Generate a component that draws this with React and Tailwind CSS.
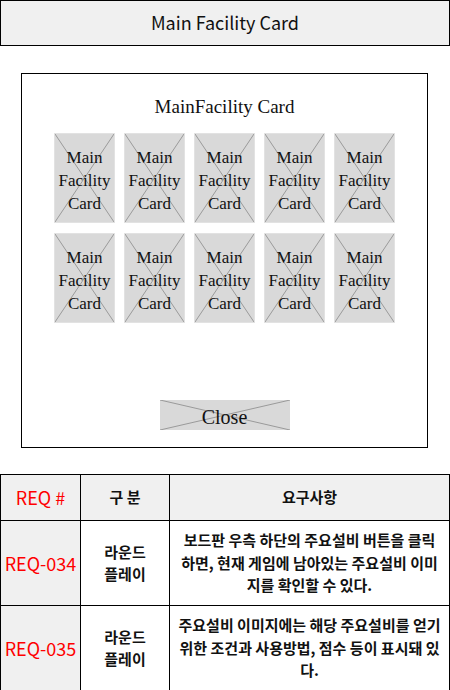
import React from "react";

const sans = "font-['Noto_Sans_CJK_KR','Noto_Sans',sans-serif]";
const serif = "font-['Liberation_Serif',serif]";

const rows = [
  {
    id: "REQ-034",
    type: ["라운드", "플레이"],
    lines: [
      "보드판 우측 하단의 주요설비 버튼을 클릭",
      "하면, 현재 게임에 남아있는 주요설비 이미",
      "지를 확인할 수 있다.",
    ],
  },
  {
    id: "REQ-035",
    type: ["라운드", "플레이"],
    lines: [
      "주요설비 이미지에는 해당 주요설비를 얻기",
      "위한 조건과 사용방법, 점수 등이 표시돼 있",
      "다.",
    ],
  },
];

// placeholder box with an X drawn across it
const Cross = () => (
  <svg
    className="absolute inset-0 w-full h-full"
    viewBox="0 0 100 100"
    preserveAspectRatio="none"
  >
    <line x1="0" y1="0" x2="100" y2="100" stroke="#9a9a9a" strokeWidth="1" vectorEffect="non-scaling-stroke" />
    <line x1="100" y1="0" x2="0" y2="100" stroke="#9a9a9a" strokeWidth="1" vectorEffect="non-scaling-stroke" />
  </svg>
);

const FacilityCard = () => (
  <div className="relative w-[61px] h-[90px] bg-[#d9d9d9] border border-[#e2e2e2] flex items-center justify-center">
    <Cross />
    <span className={`relative pt-[4px] text-[17px] leading-[23px] text-center text-[#111] ${serif}`}>
      Main
      <br />
      Facility
      <br />
      Card
    </span>
  </div>
);

const App = () => {
  return (
    <div className={`w-[450px] h-[690px] bg-white overflow-hidden ${sans}`}>
      {/* Page title */}
      <div className="h-[46px] border border-black bg-[#f0f0f0] flex items-center justify-center">
        <h1 className="text-[18px] text-[#111] pb-[1px]">Main Facility Card</h1>
      </div>

      {/* Modal mock */}
      <div className="mt-[27px] ml-[21px] w-[407px] h-[375px] border border-black flex flex-col items-center">
        <h2 className={`mt-[19px] h-[28px] leading-[28px] text-[19px] text-[#111] ${serif}`}>
          MainFacility Card
        </h2>
        <div className="mt-[12px] grid grid-cols-5 gap-x-[9px] gap-y-[10px]">
          {Array.from({ length: 10 }).map((_, i) => (
            <FacilityCard key={i} />
          ))}
        </div>
        <div className="relative mt-[77px] w-[130px] h-[30px] bg-[#d9d9d9] flex items-center justify-center">
          <Cross />
          <span className={`relative pt-[3px] text-[20px] text-[#111] ${serif}`}>Close</span>
        </div>
      </div>

      {/* Requirements table */}
      <table className="mt-[26px] w-[450px] border-collapse table-fixed">
        <colgroup>
          <col className="w-[80px]" />
          <col className="w-[89px]" />
          <col />
        </colgroup>
        <thead>
          <tr className="h-[46px] bg-[#f0f0f0]">
            <th className="border border-black text-[18px] font-normal text-[#ff0000]">REQ #</th>
            <th className="border border-black text-[15px] font-bold text-[#111]">구 분</th>
            <th className="border border-black text-[15px] font-bold text-[#111]">요구사항</th>
          </tr>
        </thead>
        <tbody>
          {rows.map((row) => (
            <tr key={row.id} className="h-[85px]">
              <td className="border border-black bg-[#f0f0f0] text-center text-[18px] text-[#ff0000]">
                {row.id}
              </td>
              <td className="border border-black text-center text-[15px] font-bold leading-[22px] text-[#111]">
                {row.type.map((t) => (
                  <div key={t}>{t}</div>
                ))}
              </td>
              <td className="border border-black text-center text-[15px] font-bold leading-[22.5px] text-[#111]">
                {row.lines.map((l) => (
                  <div key={l} className="whitespace-nowrap">{l}</div>
                ))}
              </td>
            </tr>
          ))}
        </tbody>
      </table>
    </div>
  );
};

export default App;
